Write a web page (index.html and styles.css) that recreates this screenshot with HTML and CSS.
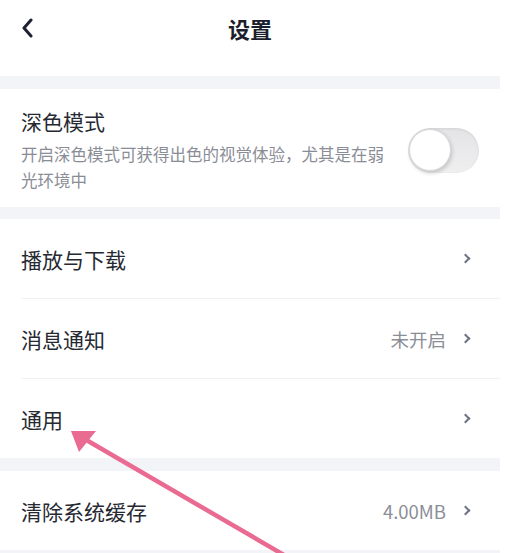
FILE: index.html
```html
<!DOCTYPE html>
<html lang="zh-CN">
<head>
  <meta charset="UTF-8">
  <title>设置</title>
  <link rel="stylesheet" href="styles.css">
</head>
<body>
  <div class="page">
    <header class="nav">
      <span class="nav-back">
        <svg width="12" height="20" viewBox="0 0 12 20"><path d="M10 2 L3 10 L10 18" stroke="#1d2130" stroke-width="3" fill="none" stroke-linecap="round" stroke-linejoin="round"/></svg>
      </span>
      <h1 class="nav-title">设置</h1>
    </header>

    <div class="band"></div>
    <section class="group">
      <div class="item item-dark">
        <div class="item-text">
          <div class="item-label">深色模式</div>
          <div class="item-desc">开启深色模式可获得出色的视觉体验，尤其是在弱光环境中</div>
        </div>
        <div class="toggle"><span class="knob"></span></div>
      </div>
    </section>

    <div class="band band-small"></div>
    <section class="group">
      <div class="item">
        <div class="item-label">播放与下载</div>
        <div class="item-right"><span class="chev"></span></div>
      </div>
      <div class="item">
        <div class="item-label">消息通知</div>
        <div class="item-right"><span class="item-value">未开启</span><span class="chev"></span></div>
      </div>
      <div class="item">
        <div class="item-label">通用</div>
        <div class="item-right"><span class="chev"></span></div>
      </div>
    </section>

    <div class="band"></div>
    <section class="group">
      <div class="item">
        <div class="item-label">清除系统缓存</div>
        <div class="item-right"><span class="item-value">4.00MB</span><span class="chev"></span></div>
      </div>
    </section>
    <div class="band band-end"></div>
  </div>

  <!-- annotation arrow -->
  <svg class="arrow" width="508" height="553" viewBox="0 0 508 553">
    <line x1="296" y1="562" x2="76" y2="434" stroke="#ea6b91" stroke-width="4.5" stroke-linecap="round"/>
    <path d="M71 431 L96 431 L79 452 Z" fill="#ea6b91"/>
  </svg>
</body>
</html>
```

FILE: styles.css
```css
body {
  margin: 0;
  background: #fff;
  font-family: "Noto Sans CJK SC", "Noto Sans", sans-serif;
  color: #23262f;
}
.page {
  width: 500px;
}
.nav {
  height: 55px;
  padding-bottom: 21px;
  display: flex;
  align-items: center;
  justify-content: center;
  position: relative;
}
.nav-back {
  position: absolute;
  left: 21px;
  top: 18px;
  display: flex;
}
.nav-title {
  margin: 0;
  font-size: 22px;
  font-weight: bold;
  color: #1b1f2d;
  line-height: 30px;
}
.band {
  height: 13px;
  background: #f2f4f8;
}
.band-small {
  height: 12px;
}
.band-end {
  height: 20px;
}
.group {
  padding-left: 21px;
}
.item {
  height: 79px;
  display: flex;
  align-items: center;
  justify-content: space-between;
  border-bottom: 1px solid #f0f1f4;
  padding-right: 29px;
}
.item:last-child {
  border-bottom: none;
}
.item-dark {
  height: auto;
  padding: 18px 21px 14px 0;
}
.item-text {
  width: 370px;
}
.item-label {
  font-size: 21px;
  line-height: 28px;
  color: #262932;
}
.item-desc {
  margin-top: 6px;
  font-size: 16.5px;
  line-height: 26px;
  color: #8a8d96;
}
.item-right {
  display: flex;
  align-items: center;
}
.item-value {
  font-size: 18.5px;
  color: #8b8e97;
  margin-right: 16px;
}
.chev {
  width: 5px;
  height: 5px;
  border-top: 2.5px solid #6f7383;
  border-right: 2.5px solid #6f7383;
  transform: rotate(45deg);
  margin-right: 2px;
}
.toggle {
  width: 71px;
  height: 45px;
  border-radius: 23px;
  background: linear-gradient(180deg, #e4e4e6, #efeff0);
  box-shadow: inset 0 1px 3px rgba(0,0,0,0.08);
  display: flex;
  align-items: center;
  padding-left: 1px;
  box-sizing: border-box;
}
.knob {
  width: 42px;
  height: 42px;
  border-radius: 50%;
  background: #fff;
  border: 1px solid #d8d8da;
  box-sizing: border-box;
  box-shadow: 1px 2px 4px rgba(0,0,0,0.18);
}
.arrow {
  position: absolute;
  left: 0;
  top: 0;
  pointer-events: none;
}
```
